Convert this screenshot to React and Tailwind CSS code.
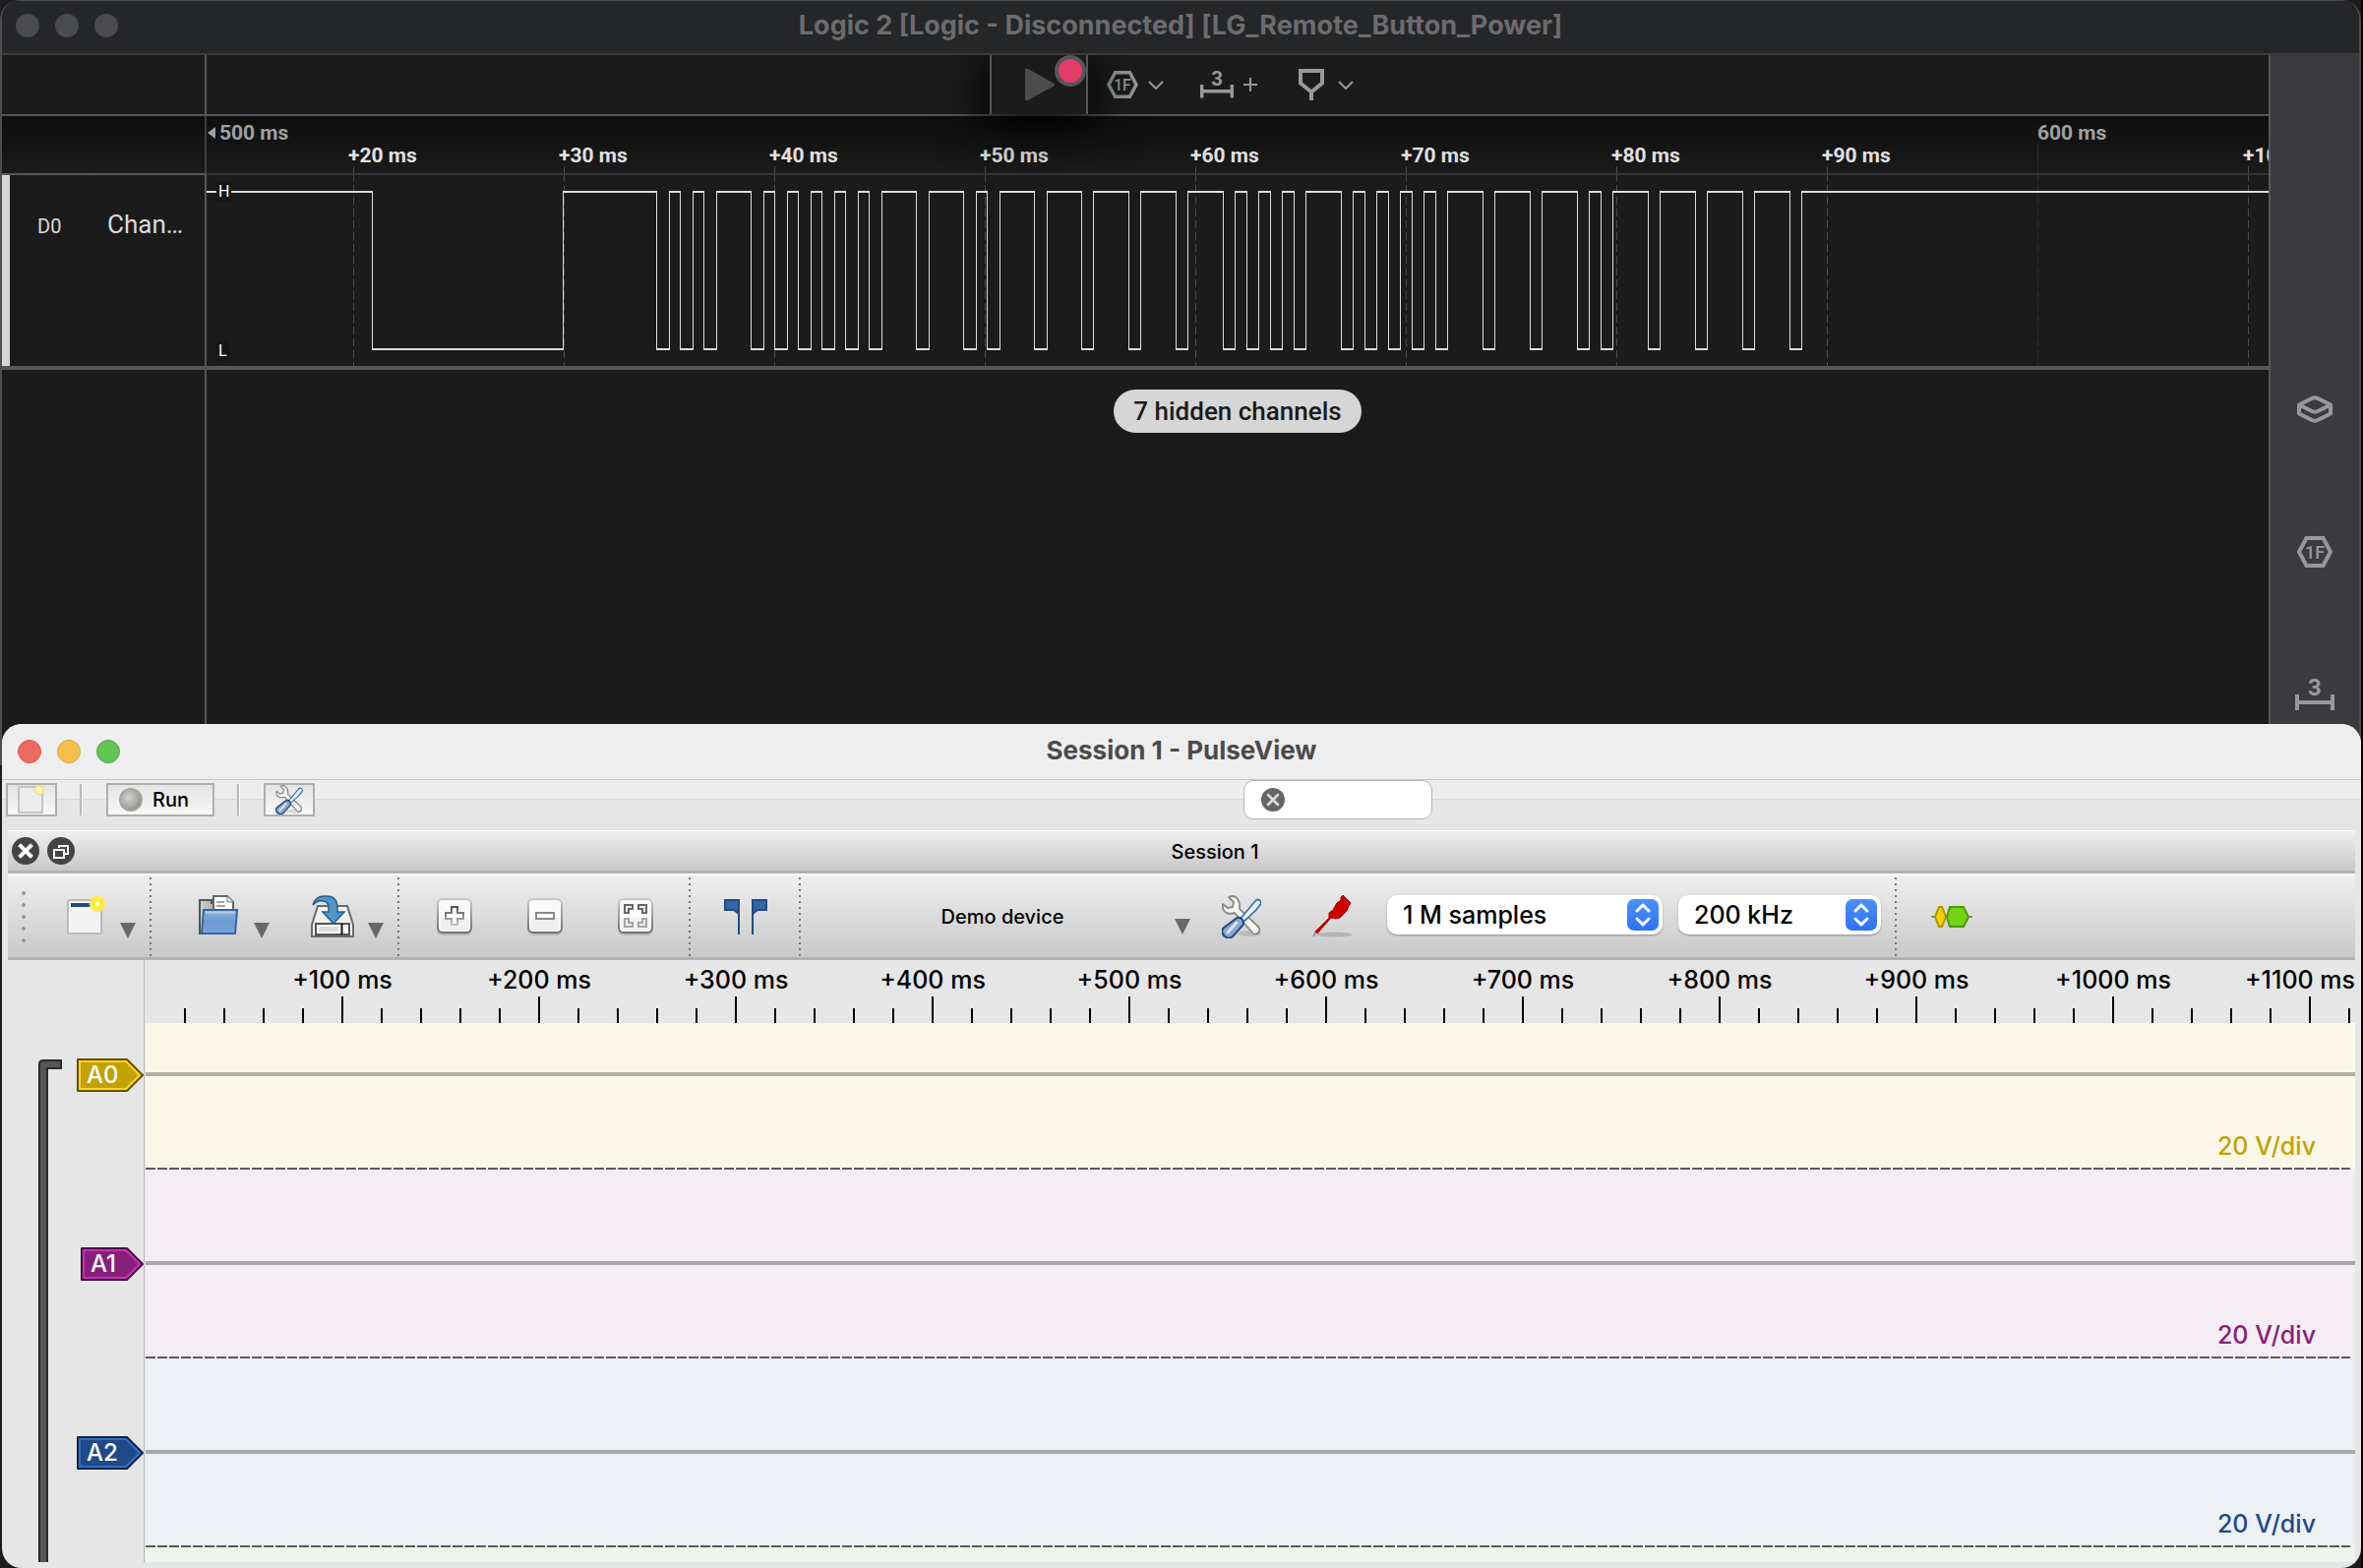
import React from 'react';

// x positions where the captured signal toggles (starts high)
const EDGES = [
    168, 362, 457, 470, 481, 494, 505, 518, 553, 566, 577, 590, 601, 614, 625, 638, 649, 662, 673, 686,
    721, 734, 769, 782, 793, 806, 841, 854, 889, 901, 937, 949, 985, 997, 1033, 1045, 1057, 1069, 1081, 1093,
    1105, 1117, 1153, 1165, 1177, 1189, 1201, 1213, 1225, 1237, 1249, 1261, 1297, 1309, 1345, 1357, 1393, 1405,
    1417, 1429, 1465, 1477, 1513, 1525, 1561, 1573, 1609, 1621,
];
const HIGH = 17;
const LOW = 177;

const GRID = [149, 363, 577, 791, 1005, 1219, 1433, 1647, 1861, 2075];
const TIMES = ['+10 ms', '+20 ms', '+30 ms', '+40 ms', '+50 ms', '+60 ms', '+70 ms', '+80 ms', '+90 ms', '', '+10 ms'];

const PULSE_TIMES = ['+100 ms', '+200 ms', '+300 ms', '+400 ms', '+500 ms', '+600 ms', '+700 ms', '+800 ms', '+900 ms', '+1000 ms'];
const PULSE_TICKS = Array.from({ length: 56 }, (_, i) => i + 1);

const CHANNELS = [
    { name: 'A0', scale: '20 V/div', bg: 'bg-[#faf7e9]', line: 'border-[#b0afa3]', text: 'text-[#c4a000]', fill: '#c4a000', inner: '#ffd723', outer: '#625000', width: 68 },
    { name: 'A1', scale: '20 V/div', bg: 'bg-[#f4edf4]', line: 'border-[#aba6ab]', text: 'text-[#87207a]', fill: '#87207a', inner: '#cb30b8', outer: '#43103d', width: 64 },
    { name: 'A2', scale: '20 V/div', bg: 'bg-[#edf0f5]', line: 'border-[#a6a8ab]', text: 'text-[#204a87]', fill: '#204a87', inner: '#306fcb', outer: '#102543', width: 68 },
];

const HexIcon = ({ className = 'w-9 h-8' }) => (
    <svg className={className} viewBox="0 0 36 32" fill="none">
        <path d="M9.500 2h17L34 16l-7.500 14h-17L2 16z" stroke="#98989a" strokeWidth="4" />
        <text x="18" y="22.500" textAnchor="middle" fill="#98989a" fontFamily="Roboto" fontWeight="500" fontSize="18">1F</text>
    </svg>
);

const MeasureIcon = ({ className = 'w-10 h-[34px]' }) => (
    <svg className={`overflow-visible ${className}`} viewBox="0 0 40 34" fill="none">
        <text x="20" y="18" textAnchor="middle" fill="#98989a" fontFamily="Roboto" fontWeight="700" fontSize="24">3</text>
        <path d="M2 17v16M38 17v16M2 25h36" stroke="#98989a" strokeWidth="4" />
    </svg>
);

const LayersIcon = () => (
    <svg width="36" height="28" viewBox="0 0 36 28" fill="none" stroke="#98989a" strokeWidth="4" strokeLinejoin="round">
        <path d="M2 9.500L15 3q3-1.500 6 0l13 6.500v9L21 25q-3 1.500-6 0L2 18.500z" />
        <path d="M2 9.500L15 16q3 1.500 6 0l13-6.500" />
    </svg>
);

const MarkerIcon = () => (
    <svg width="26" height="32" viewBox="0 0 26 32" fill="none" stroke="#98989a" strokeWidth="4">
        <path d="M2 2h22v12.500L13 23.500 2 14.500zM13 22v10" />
    </svg>
);

const ChevronIcon = () => (
    <svg width="16" height="9" viewBox="0 0 16 9" fill="none" stroke="#98989a" strokeWidth="2">
        <path d="M1 1l7 7 7-7" />
    </svg>
);

const ArrowDown = () => (
    <svg className="self-end" width="16" height="16" viewBox="0 0 16 16">
        <path d="M0 0h16L8 16z" fill="#686868" />
    </svg>
);

const NewIcon = () => (
    <svg width="40" height="44" viewBox="0 0 40 44">
        <rect x="1" y="5" width="34" height="34" rx="1" fill="#f3f3f3" stroke="#babdb6" strokeWidth="2" />
        <path d="M4 8h20v4H4z" fill="#204a87" />
        <circle cx="31" cy="9" r="8.500" fill="#fce94f" opacity="0.75" />
        <circle cx="31" cy="9" r="6" fill="#fbef1f" />
        <circle cx="31" cy="9" r="2.500" fill="#fff" />
    </svg>
);

const FolderIcon = () => (
    <svg width="40" height="44" viewBox="0 0 40 44">
        <defs>
            <linearGradient id="folder" x1="0" y1="0" x2="0" y2="1">
                <stop offset="0" stopColor="#8fb3dc" />
                <stop offset="0.5" stopColor="#6d9bd1" />
                <stop offset="1" stopColor="#7ba7da" />
            </linearGradient>
            <linearGradient id="folderBack" x1="0" y1="0" x2="1" y2="0">
                <stop offset="0" stopColor="#d0d0d0" />
                <stop offset="1" stopColor="#888a85" />
            </linearGradient>
        </defs>
        <path d="M1 39V5h12v3h22v31z" fill="url(#folderBack)" stroke="#555753" strokeWidth="2" />
        <path d="M15 20V1h14l6 6v13z" fill="#fff" stroke="#666" strokeWidth="2" />
        <path d="M29 1v6h6" fill="#eee" stroke="#777" strokeWidth="1" />
        <path d="M18 7h8M18 11h9" stroke="#888" strokeWidth="1.500" />
        <path d="M5 15h34l-2 24H3z" fill="url(#folder)" stroke="#3465a4" strokeWidth="2" />
        <path d="M7 17.500h30" stroke="#b5cfea" strokeWidth="2" />
    </svg>
);

const SaveIcon = () => (
    <svg width="44" height="44" viewBox="0 0 44 44">
        <path d="M7 11h30l6 19v12H1V30z" fill="#f0f0ee" stroke="#6b6c69" strokeWidth="2" />
        <path d="M5 29h34v11H5z" fill="#fff" stroke="#555753" strokeWidth="2" />
        <path d="M8 32h20v5H8z" fill="#dcdcda" />
        <path d="M31.500 29v11" stroke="#111" strokeWidth="2" />
        <path d="M2 10Q5 1 13 1h3q11 0 11 12v4h7L23 29 12 17h6v-4q0-7-6-7-5-1-10 4z" fill="#5294c6" stroke="#20618f" strokeWidth="1.500" />
    </svg>
);

const BoxIcon = ({ children }) => (
    <svg width="36" height="38" viewBox="0 0 36 38">
        <defs>
            <linearGradient id="boxEdge" x1="0" y1="0" x2="0" y2="1">
                <stop offset="0" stopColor="#c8c8c6" />
                <stop offset="1" stopColor="#6f706d" />
            </linearGradient>
            <linearGradient id="boxGlyph" x1="0" y1="0" x2="0" y2="1">
                <stop offset="0" stopColor="#555" />
                <stop offset="1" stopColor="#c0c0be" />
            </linearGradient>
        </defs>
        <rect x="0" y="3" width="36" height="35" rx="6" fill="#000" opacity="0.12" />
        <rect x="1" y="1" width="34" height="34" rx="5" fill="#fafafa" stroke="url(#boxEdge)" strokeWidth="2" />
        <path d="M4 20h28v12H4z" fill="#e9e9e8" opacity="0.6" />
        {children}
    </svg>
);

const ToolsIcon = ({ className = 'w-10 h-11' }) => (
    <svg className={className} viewBox="0 0 40 44">
        <ellipse cx="28" cy="39" rx="12" ry="3" fill="#000" opacity="0.12" />
        <path
            d="M7 2l5 5-1 5-5 1-5-4q-1 9 7 10l5-1 19 21q4 2 6-2 1-3-1-5L18 14q1-8-4-12Q11 0 7 2z"
            fill="#f4f4f3"
            stroke="#888a85"
            strokeWidth="1.800"
            strokeLinejoin="round"
        />
        <path d="M34 6l-5 6-11 13 3 3 13-12 4-5q3-3 1-5-2-3-5 0z" fill="#eef3fa" stroke="#3f74b8" strokeWidth="1.800" />
        <path d="M14 24q4-3 7 1 2 3 0 6L11 42q-4 3-8 0-4-3-2-8z" fill="#8ba7c9" stroke="#204a87" strokeWidth="2" />
        <path d="M15 28L6 38" stroke="#dbe5f1" strokeWidth="3" strokeLinecap="round" />
    </svg>
);

const ProbeIcon = () => (
    <svg width="40" height="44" viewBox="0 0 40 44">
        <ellipse cx="22" cy="40" rx="18" ry="2.500" fill="#000" opacity="0.15" />
        <path d="M1 42l3-6" stroke="#999" strokeWidth="2" />
        <path d="M3 37L17 23v-5l4-3 4-7 4-3V2l2-2 8 8-2 3-2 5-7 7-4 1-5-1L5 39z" fill="#cc0000" stroke="#b00000" strokeWidth="1" />
    </svg>
);

const FlagsIcon = () => (
    <svg width="44" height="36" viewBox="0 0 44 36" fill="#3465a4" stroke="#204a87" strokeWidth="2">
        <path d="M15 36V1H1v10h9l5 4" />
        <path d="M29 36V1h14v10h-9l-5 4" />
    </svg>
);

const DecoderIcon = () => (
    <svg width="42" height="24" viewBox="0 0 42 24">
        <path d="M0 12h42" stroke="#888" strokeWidth="2" />
        <path d="M8 2h3l4 10-4 10H8L4 12z" fill="#edd400" stroke="#b89000" strokeWidth="2" />
        <path d="M19 2h14l5 10-5 10H19l-3-10z" fill="#73d216" stroke="#4e9a06" strokeWidth="2" />
    </svg>
);

const Stepper = () => (
    <svg className="absolute right-1 top-1 pointer-events-none" width="32" height="32" viewBox="0 0 32 32">
        <defs>
            <linearGradient id="stepper" x1="0" y1="0" x2="0" y2="1">
                <stop offset="0" stopColor="#4b92f8" />
                <stop offset="1" stopColor="#2f72f5" />
            </linearGradient>
        </defs>
        <rect width="32" height="32" rx="7" fill="url(#stepper)" />
        <path d="M10 12l6-6 6 6M10 20l6 6 6-6" fill="none" stroke="#fff" strokeWidth="3" strokeLinecap="round" strokeLinejoin="round" />
    </svg>
);

const Divider = () => (
    <div className="w-[2px] h-20 shrink-0 bg-[repeating-linear-gradient(180deg,#777_0_2px,transparent_2px_6px)]" />
);

const ToolButton = ({ label, children }) => (
    <button type="button" aria-label={label} className="w-[92px] h-16 shrink-0 flex items-center justify-center">
        {children}
    </button>
);

const waveLevels = () => {
    let d = `M0 ${HIGH}`;
    EDGES.forEach((x, i) => {
        d += `H${x + 1}M${x} ${i % 2 === 0 ? LOW : HIGH}`;
    });
    return d + 'H4000';
};

const waveEdges = () => EDGES.map((x) => `M${x + 0.5} ${HIGH - 1}V${LOW + 1}`).join('');

const LogicWindow = () => (
    <section className="rounded-t-[20px] border-x-2 border-[#4e4e51] bg-[#1b1b1b] overflow-hidden font-[Roboto,sans-serif]">
        <header className="relative z-20 h-14 bg-[#252628] border-t border-[#4a4b4d] border-b-2 border-b-[#3c3c3c] flex items-center px-3.5 pb-1">
            <div className="flex gap-4 w-[120px]">
                <span className="w-6 h-6 rounded-full bg-[#4a4b4d]" />
                <span className="w-6 h-6 rounded-full bg-[#4a4b4d]" />
                <span className="w-6 h-6 rounded-full bg-[#4a4b4d]" />
            </div>
            <h1 className="flex-1 pr-[120px] text-center text-[27px] leading-8 font-bold text-[#6b6c6e] font-[Inter,sans-serif] whitespace-nowrap">
                Logic 2 [Logic - Disconnected] [LG_Remote_Button_Power]
            </h1>
        </header>

        <div className="flex">
            <div className="flex-1 min-w-0 flex flex-col">
                <div className="relative z-10 flex h-[62px] border-b-2 border-[#56565d]">
                    <div className="w-[208px] shrink-0 border-r-2 border-[#56565d]" />
                    <div className="flex-1 flex justify-center">
                        <div className="w-[504px] flex items-center">
                            <button
                                type="button"
                                aria-label="Start capture"
                                className="relative w-[100px] h-full flex items-center pl-[34px] border-x-2 border-[#56565d] bg-[#1b1b1b] shadow-[0_8px_48px_8px_rgba(0,0,0,0.85)]"
                            >
                                <svg width="30" height="34" viewBox="0 0 30 34">
                                    <path d="M0 2Q0 0 3 1l26 14.500q2 1.500 0 3L3 33q-3 1-3-1z" fill="#4c4c4c" />
                                </svg>
                                <span className="absolute right-0 top-0 w-8 h-8 rounded-full bg-[#e23d66] border-4 border-[#56565d]" />
                            </button>
                            <button type="button" aria-label="Analyzers" className="ml-[19px] flex items-center gap-2.5">
                                <HexIcon className="w-8 h-7" />
                                <ChevronIcon />
                            </button>
                            <button type="button" aria-label="Add measurement" className="ml-[37px] flex items-center gap-2.5">
                                <MeasureIcon className="w-[34px] h-8" />
                                <svg width="14" height="14" viewBox="0 0 14 14" stroke="#98989a" strokeWidth="2">
                                    <path d="M7 0v14M0 7h14" />
                                </svg>
                            </button>
                            <button type="button" aria-label="Markers" className="ml-[42px] flex items-center gap-3.5">
                                <MarkerIcon />
                                <ChevronIcon />
                            </button>
                        </div>
                    </div>
                </div>

                <div className="flex h-[60px] bg-linear-to-b from-[#0e0e0e] to-[#1b1b1b]">
                    <div className="w-[208px] shrink-0 border-r-2 border-[#3f3f44] border-b-2 border-b-[#56565d]" />
                    <div className="relative flex-1 min-w-0 overflow-hidden border-b-2 border-[#333338] font-bold text-[21px] whitespace-nowrap">
                        <svg className="absolute inset-0 w-full h-full" fill="none">
                            {GRID.map((x) => (
                                <path key={x} d={x === 1861 ? `M${x + 0.5} 28V60` : `M${x + 0.5} 51V60`} stroke={x === 1861 ? '#2c2c2e' : '#4f4f52'} />
                            ))}
                        </svg>
                        <div className="flex pt-1.5 leading-[22px] text-[#a0a0a0]">
                            <span className="w-[1861px] shrink-0 flex items-center gap-1 pl-px">
                                <svg width="8" height="12" viewBox="0 0 8 12">
                                    <path d="M8 0v12L0 6z" fill="#a0a0a0" />
                                </svg>
                                500 ms
                            </span>
                            <span>600 ms</span>
                        </div>
                        <div className="flex -ml-[70px] leading-6 text-[#e0e0e0]">
                            {TIMES.map((time, i) => (
                                <span key={i} className="w-[214px] shrink-0">{time}</span>
                            ))}
                        </div>
                    </div>
                </div>

                <div className="flex h-[198px] border-b-4 border-[#56565d]">
                    <div className="w-[208px] shrink-0 border-l-8 border-l-[#d6d6d6] border-r-2 border-r-[#56565d] flex items-baseline pt-8 pl-7 text-[#dadada]">
                        <span className="w-[71px] text-[20px] leading-9">D0</span>
                        <span className="text-[26px] leading-9">Chan…</span>
                    </div>
                    <div className="relative flex-1 min-w-0 text-white text-[16px] leading-5">
                        <svg className="absolute inset-0 w-full h-full" fill="none" shapeRendering="crispEdges">
                            {GRID.map((x) => (
                                <path
                                    key={x}
                                    d={`M${x + 0.5} 0V194`}
                                    stroke={x === 1861 ? '#2b2b2d' : '#4b4b4e'}
                                    strokeDasharray="8 4"
                                    strokeDashoffset="2"
                                />
                            ))}
                            <path d={waveLevels()} stroke="#dcdcdc" strokeWidth="2" />
                            <path d={waveEdges()} stroke="#dcdcdc" />
                        </svg>
                        <div className="relative h-full flex flex-col items-start justify-between pl-2.5 pt-[7px] pb-[5px]">
                            <span className="px-0.5 rounded-sm bg-[#161616]">H</span>
                            <span className="px-0.5 rounded-sm bg-[#161616]">L</span>
                        </div>
                    </div>
                </div>

                <div className="flex flex-1">
                    <div className="w-[208px] shrink-0 border-r-2 border-[#56565d]" />
                    <div className="flex-1 flex justify-center items-start pt-5">
                        <button type="button" className="h-11 w-[252px] rounded-full bg-[#d6d6d6] text-[#1b1b1b] text-[26px] leading-9 font-medium">
                            7 hidden channels
                        </button>
                    </div>
                </div>
            </div>

            <nav className="w-[92px] shrink-0 border-l-2 border-[#56565d] bg-[#3b3a3e] pt-[287px] flex flex-col">
                <button type="button" aria-label="Devices" className="h-[145px] flex items-center justify-center">
                    <LayersIcon />
                </button>
                <button type="button" aria-label="Analyzers panel" className="h-[145px] flex items-center justify-center">
                    <HexIcon />
                </button>
                <button type="button" aria-label="Measurements panel" className="h-[145px] flex items-center justify-center">
                    <MeasureIcon />
                </button>
            </nav>
        </div>
    </section>
);

const SessionToolbar = () => (
    <div className="h-[88px] flex items-center pl-3.5 border-t-2 border-t-[#fbfbfb] border-b-3 border-b-[#b2b2b2] bg-linear-to-b from-[#efefef] to-[#c9c9c9] text-[20px] leading-6 font-medium overflow-hidden">
        <div className="w-1 h-[60px] shrink-0 bg-[radial-gradient(circle,#999_0_2px,transparent_2px)] bg-size-[4px_12px]" />
        <button type="button" aria-label="New view" className="ml-[42px] flex gap-3.5 shrink-0">
            <NewIcon />
            <ArrowDown />
        </button>
        <div className="w-3.5 shrink-0" />
        <Divider />
        <button type="button" aria-label="Open" className="ml-12 flex gap-4 shrink-0">
            <FolderIcon />
            <ArrowDown />
        </button>
        <button type="button" aria-label="Save" className="ml-[42px] mr-3.5 flex gap-3.5 shrink-0">
            <SaveIcon />
            <ArrowDown />
        </button>
        <Divider />
        <div className="flex pl-2.5 pr-2">
            <ToolButton label="Zoom in">
                <BoxIcon>
                    <path d="M15 9h6v6h6v6h-6v6h-6v-6H9v-6h6z" fill="#fff" stroke="url(#boxGlyph)" strokeWidth="2" />
                </BoxIcon>
            </ToolButton>
            <ToolButton label="Zoom out">
                <BoxIcon>
                    <path d="M9 15h18v6H9z" fill="#fff" stroke="#8a8a88" strokeWidth="2" />
                </BoxIcon>
            </ToolButton>
            <ToolButton label="Zoom to fit">
                <BoxIcon>
                    <path d="M7 7h8v4h-4v4H7zM21 7h8v8h-4v-4h-4z" fill="#eee" stroke="#666" strokeWidth="2" />
                    <path d="M7 21h4v4h4v4H7zM25 21h4v8h-8v-4h4z" fill="#eee" stroke="#a5a5a3" strokeWidth="2" />
                </BoxIcon>
            </ToolButton>
        </div>
        <Divider />
        <div className="flex pl-2.5 pr-2">
            <ToolButton label="Show cursors">
                <FlagsIcon />
            </ToolButton>
        </div>
        <Divider />
        <button type="button" className="ml-2 w-[394px] h-9 shrink-0 flex items-center pr-1.5 pl-[22px]">
            <span className="flex-1 text-center">Demo device</span>
            <ArrowDown />
        </button>
        <ToolButton label="Configure device">
            <ToolsIcon />
        </ToolButton>
        <ToolButton label="Configure channels">
            <ProbeIcon />
        </ToolButton>
        <div className="flex gap-4 pl-2.5 pr-3.5 pb-1 shrink-0">
            <div className="relative w-[280px]">
                <select aria-label="Sample count" className="appearance-none w-full h-10 rounded-[10px] bg-white shadow-[0_1px_2px_rgba(0,0,0,0.35)] pl-4 text-[25px] leading-8">
                    <option>1 M samples</option>
                </select>
                <Stepper />
            </div>
            <div className="relative w-[206px]">
                <select aria-label="Sample rate" className="appearance-none w-full h-10 rounded-[10px] bg-white shadow-[0_1px_2px_rgba(0,0,0,0.35)] pl-4 text-[25px] leading-8">
                    <option>200 kHz</option>
                </select>
                <Stepper />
            </div>
        </div>
        <Divider />
        <div className="pl-2.5">
            <ToolButton label="Add protocol decoder">
                <DecoderIcon />
            </ToolButton>
        </div>
    </div>
);

const ChannelTag = ({ channel }) => {
    const w = channel.width;
    return (
        <div className="relative h-[34px] flex items-center text-white text-[24px] leading-8 font-medium pl-2.5" style={{ width: w }}>
            <svg className="absolute inset-0" width={w} height="34" viewBox={`0 0 ${w} 34`}>
                <path d={`M1 1H${w - 17}L${w - 1} 17L${w - 17} 33H1z`} fill={channel.fill} stroke={channel.outer} strokeWidth="2" strokeLinejoin="round" />
                <path d={`M3 3H${w - 18}L${w - 4} 17L${w - 18} 31H3z`} fill="none" stroke={channel.inner} strokeWidth="2" />
            </svg>
            <span className="relative">{channel.name}</span>
        </div>
    );
};

const TraceView = () => (
    <div className="text-black text-[25px] leading-10 font-medium">
        <div className="flex h-16">
            <div className="w-[139px] shrink-0 border-r border-[#b9b9b9]" />
            <div className="relative flex-1 min-w-0 ml-px overflow-hidden">
                <svg className="absolute bottom-0 left-0 w-full h-[27px]" shapeRendering="crispEdges">
                    {PULSE_TICKS.map((n) => (
                        <path key={n} d={n % 5 === 0 ? `M${n * 40} 0V27` : `M${n * 40} 12V27`} stroke="#000" strokeWidth="2" />
                    ))}
                </svg>
                <div className="flex pl-[100px] whitespace-nowrap">
                    {PULSE_TIMES.map((time) => (
                        <span key={time} className="w-[200px] shrink-0 text-center">{time}</span>
                    ))}
                    <span className="flex-1 text-right">+1100 ms</span>
                </div>
            </div>
        </div>

        <div className="relative h-[548px] overflow-hidden">
            <div className="-mt-[43px]">
                {CHANNELS.map((channel) => (
                    <div key={channel.name} className="flex h-48">
                        <div className="w-[139px] shrink-0 border-r border-[#b9b9b9] flex items-center justify-end">
                            <ChannelTag channel={channel} />
                        </div>
                        <div className={`flex-1 ml-px flex flex-col ${channel.bg}`}>
                            <div className={`h-[97px] border-b-4 ${channel.line}`} />
                            <div className={`flex-1 flex items-end justify-end pr-10 pb-0.5 ${channel.text}`}>
                                {channel.scale}
                            </div>
                            <div className="h-0.5 mr-[5px] bg-[repeating-linear-gradient(90deg,#5a5a5a_0_10px,transparent_10px_12px)]" />
                        </div>
                    </div>
                ))}
                <div className="flex h-[15px]">
                    <div className="w-[139px] shrink-0 border-r border-[#b9b9b9]" />
                    <div className="flex-1 ml-px bg-[#f0f5ec]" />
                </div>
            </div>
            <svg className="absolute left-[31px] top-[37px]" width="24" height="520" viewBox="0 0 24 520">
                <path d="M1 530V5q0-4 4-4h18v8H9v521z" fill="#555753" stroke="#2a2b29" strokeWidth="2" />
            </svg>
        </div>
    </div>
);

const PulseViewWindow = () => (
    <section className="relative z-30 -mt-[42px] ml-0.5 rounded-[20px] bg-[#e6e6e6] overflow-hidden font-[Inter,sans-serif] text-black">
        <header className="h-[57px] bg-[#eeeeef] border-b border-[#c6c6c6] flex items-center px-4">
            <div className="flex gap-4 w-[120px]">
                <span className="w-6 h-6 rounded-full bg-[#ed6a5e] border border-[#d55a4e]" />
                <span className="w-6 h-6 rounded-full bg-[#f5bf4f] border border-[#d9a43d]" />
                <span className="w-6 h-6 rounded-full bg-[#61c554] border border-[#4fab43]" />
            </div>
            <h2 className="flex-1 pr-[120px] pb-0.5 text-center text-[26px] leading-8 font-bold text-[#4b4b4b] whitespace-nowrap">
                Session 1 - PulseView
            </h2>
        </header>

        <div className="h-[51px] pb-[11px] flex items-center pl-1 bg-[linear-gradient(#ededed_0_19px,#d9d9d9_19px_20px,#e6e6e6_20px)]">
            <button type="button" aria-label="New session" className="w-[52px] h-[34px] border-2 border-[#aeaeae] bg-linear-to-b from-[#e4e4e4] to-[#f8f8f8] flex justify-center items-center">
                <svg width="28" height="30" viewBox="0 0 28 30">
                    <rect x="1" y="2" width="24" height="26" fill="#ececec" stroke="#c4c4c2" strokeWidth="2" />
                    <circle cx="22" cy="5" r="4" fill="#fdfbd0" stroke="#f1e67c" strokeWidth="2" />
                </svg>
            </button>
            <div className="ml-[23px] w-[3px] h-8 bg-[#b8b8b8] border-r border-white" />
            <button type="button" className="ml-6 w-[110px] h-[34px] border-2 border-[#aeaeae] bg-linear-to-b from-[#e4e4e4] to-[#f8f8f8] flex items-center gap-2.5 pl-[11px] text-[20px] leading-6 font-medium">
                <svg width="24" height="24" viewBox="0 0 24 24">
                    <defs>
                        <radialGradient id="led" cx="0.4" cy="0.4" r="0.6">
                            <stop offset="0" stopColor="#cfd1ca" />
                            <stop offset="0.7" stopColor="#a9aba5" />
                            <stop offset="1" stopColor="#8b8d88" />
                        </radialGradient>
                    </defs>
                    <circle cx="12" cy="12" r="11" fill="url(#led)" stroke="#a4a6a0" strokeWidth="2" />
                </svg>
                Run
            </button>
            <div className="ml-[23px] w-[3px] h-8 bg-[#b8b8b8] border-r border-white" />
            <button type="button" aria-label="Settings" className="ml-6 w-[52px] h-[34px] border-2 border-[#aeaeae] bg-linear-to-b from-[#e4e4e4] to-[#f8f8f8] flex justify-center items-center">
                <ToolsIcon className="w-7 h-[30px]" />
            </button>
            <div className="flex-1 flex justify-center">
                <div className="w-48 h-10 rounded-[10px] bg-white border border-[#b4b4b4] flex items-center pl-[17px] pr-2">
                    <button type="button" aria-label="Clear search">
                        <svg width="24" height="24" viewBox="0 0 24 24">
                            <circle cx="12" cy="12" r="12" fill="#666" />
                            <path d="M7 7l10 10M17 7L7 17" stroke="#ddd" strokeWidth="2.500" strokeLinecap="round" />
                        </svg>
                    </button>
                    <input type="text" aria-label="Search" className="flex-1 min-w-0 ml-2 text-[20px] leading-6 outline-none" />
                </div>
            </div>
        </div>

        <div className="px-1.5 pb-1.5">
            <div className="h-11 flex items-center pl-1 border-t border-t-white border-b-3 border-b-[#b2b2b2] bg-linear-to-b from-[#efefef] to-[#c8c8c8]">
                <div className="flex gap-2 w-20">
                    <button type="button" aria-label="Close session">
                        <svg width="28" height="28" viewBox="0 0 28 28">
                            <circle cx="14" cy="14" r="14" fill="#444" />
                            <path d="M9 9l10 10M19 9L9 19" stroke="#fff" strokeWidth="4" strokeLinecap="square" />
                        </svg>
                    </button>
                    <button type="button" aria-label="Detach session">
                        <svg width="28" height="28" viewBox="0 0 28 28" fill="none" stroke="#fff" strokeWidth="2">
                            <circle cx="14" cy="14" r="14" fill="#444" stroke="none" />
                            <path d="M12 11V9h9v8h-3" />
                            <path d="M7 13h10v8H7z" />
                        </svg>
                    </button>
                </div>
                <h3 className="flex-1 pr-4 pt-0.5 text-center text-[20px] leading-6 font-medium">Session 1</h3>
            </div>
            <SessionToolbar />
            <TraceView />
        </div>
    </section>
);

const App = () => {
    return (
        <main className="min-h-screen bg-[#1c1c1e] border-r-2 border-black overflow-x-hidden">
            <LogicWindow />
            <PulseViewWindow />
        </main>
    );
};

export default App;
